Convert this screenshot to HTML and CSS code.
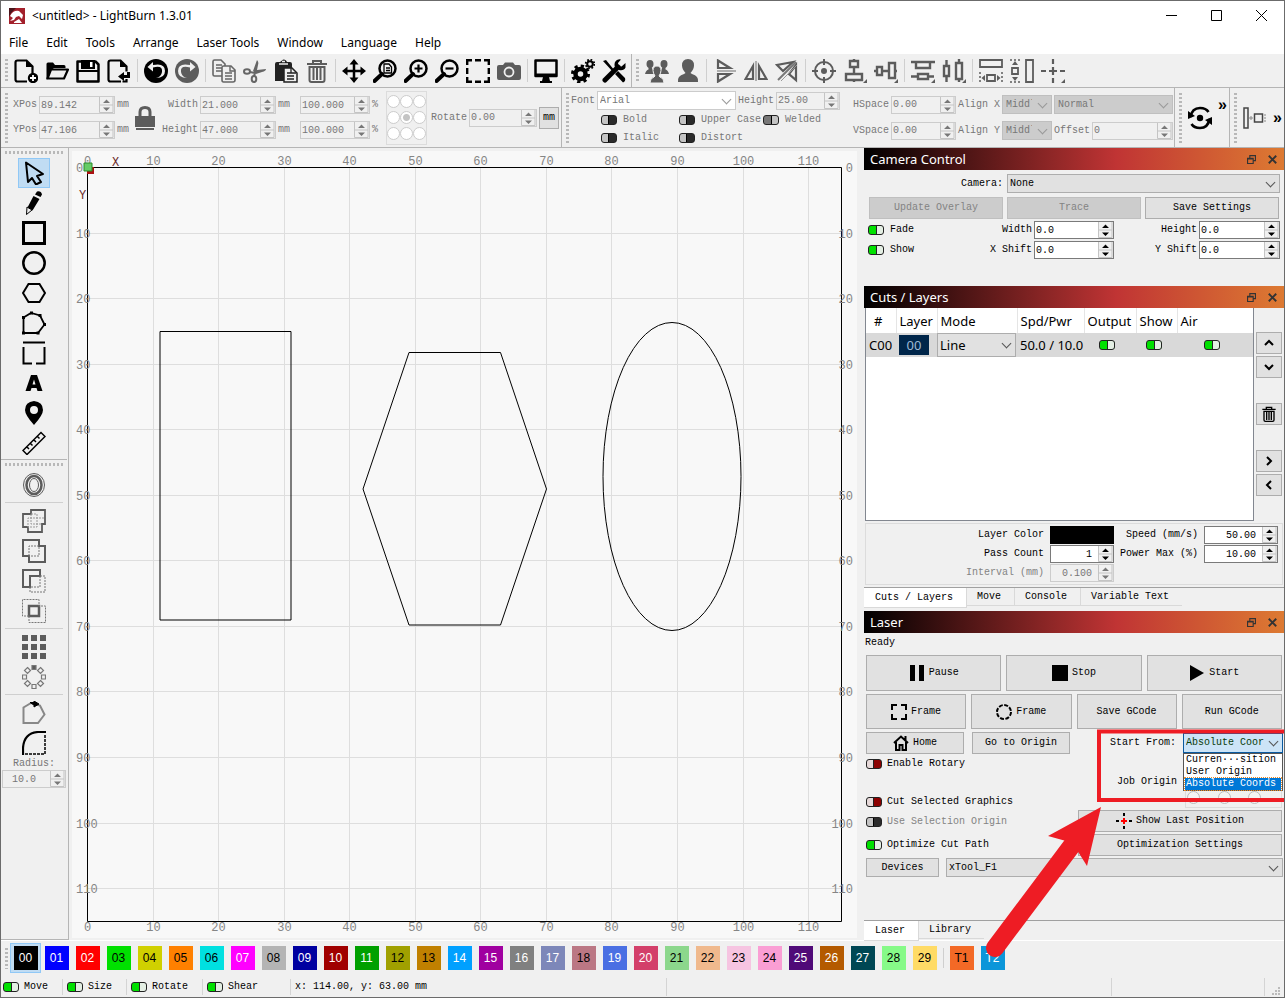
FILE: index.html
```html
<!DOCTYPE html>
<html lang="en">
<head>
    <meta charset="UTF-8">
    <meta name="viewport" content="width=device-width, initial-scale=1.0">
    <title>LightBurn 1.3.01</title>
    <link rel="stylesheet" href="styles.css">
</head>
<body>
  <!-- icon sprite -->
  <svg class="sprite" aria-hidden="true">
    <symbol id="spin" viewBox="0 0 15 16"><path d="M.5 0v15.500h13.500V0M.5 8h13.500" fill="none" stroke="#c4c4c4"/><path d="M4 6L7.500 2.500 11 6zM4 10.500h7L7.500 14z" fill="currentColor"/></symbol>
    <symbol id="new" viewBox="0 0 24 24"><path d="M13 22.500H3.500q-2 0-2-2v-17q0-2 2-2h9l6 6v7" fill="none" stroke="#000" stroke-width="2.200"/><path d="M12 1v7h7z"/><circle cx="19" cy="19" r="5.200"/><path d="M19 16v6M16 19h6" stroke="#fff" stroke-width="1.800"/></symbol>
    <symbol id="open" viewBox="0 0 24 24"><path d="M1.500 20V5q0-1.500 1.500-1.500h5l2 2.500h9q1.500 0 1.500 1.500V9H9L5 12 2 21z"/><path d="M6 10.500h17L19 19.500H2.500z" fill="#efefef" stroke="#000" stroke-width="2.200" stroke-linejoin="round"/></symbol>
    <symbol id="save" viewBox="0 0 24 24"><path d="M1.500 2.500h18l3 3v17h-21z" fill="#efefef" stroke="#000" stroke-width="2.500" stroke-linejoin="round"/><path d="M5 1h14v9H5z"/><path d="M14 3h2.500v5H14z" fill="#fff"/><path d="M2 12h20" stroke="#000" stroke-width="2"/></symbol>
    <symbol id="import" viewBox="0 0 24 24"><path d="M14 22.500H3.500q-2 0-2-2v-17q0-2 2-2h10l6 6v5M19.500 20v2.500h-4" fill="none" stroke="#000" stroke-width="2.200"/><path d="M13 1v7h7zM11 17.500l6-4.500v3h3v-3h3v6h-6v3z"/></symbol>
    <symbol id="undo" viewBox="0 0 24 24"><circle cx="12" cy="12" r="12"/><path d="M9 8.500Q19 6 18 13q-.8 5-6 6 9 0 9-7 0-8.500-12-6V3L3.500 8 9 12.500z" fill="#efefef"/></symbol>
    <symbol id="redo" viewBox="0 0 24 24"><circle cx="12" cy="12" r="12" fill="#5c5c5c"/><path d="M15 8.500Q5 6 6 13q.8 5 6 6-9 0-9-7 0-8.500 12-6V3l5.500 5-5.500 4.500z" fill="#efefef"/></symbol>
    <symbol id="copy" viewBox="0 0 24 24"><g fill="#efefef" stroke="#666" stroke-width="1.600"><path d="M12 17H2.500Q1 17 1 15.500v-13Q1 1 2.500 1H9l4 4v10z"/><path d="M4 6h6M4 9h6M4 12h6" stroke-width="1.400"/><path d="M11.500 7H19l4 4v10q0 2-2 2h-9.500Q10 23 10 21V8.500Q10 7 11.500 7z"/><path d="M18 7v5h5M13 14h7M13 17h7M13 20h7" fill="none" stroke-width="1.400"/></g></symbol>
    <symbol id="cut" viewBox="0 0 24 24"><g fill="none" stroke="#666" stroke-width="2"><ellipse cx="4" cy="12.500" rx="3" ry="2.300"/><ellipse cx="11" cy="20" rx="2.300" ry="3"/><path d="M7 13l5 1-1 3"/></g><path d="M10 12l4-11q2 2 1 5l-1 5 9-1q0 2-4 3l-6 2z" fill="#666"/></symbol>
    <symbol id="paste" viewBox="0 0 24 24"><path d="M1 5q0-2 2-2h3l2-1.500Q9.500-.5 12 1.500L13 3h3q2 0 2 2v17H1z" fill="#222"/><path d="M5 5h9M8 2.500h3" stroke="#efefef" stroke-width="1.500"/><path d="M10 9h8l5 5v9H10z" fill="#efefef" stroke="#222" stroke-width="1.500"/><path d="M13 14h7M13 17h7M13 20h7M17 9v5h5" fill="none" stroke="#222" stroke-width="1.300"/></symbol>
    <symbol id="trash" viewBox="0 0 24 24"><path d="M2 5h20M8 5V2h8v3" fill="none" stroke="currentColor" stroke-width="2"/><path d="M4.500 8h15v13q0 2-2 2h-11q-2 0-2-2z" fill="none" stroke="currentColor" stroke-width="2"/><path d="M8.500 9v12M12 9v12M15.500 9v12" stroke="currentColor" stroke-width="2"/></symbol>
    <symbol id="move" viewBox="0 0 24 24"><path d="M12 3v18M3 12h18" stroke="#000" stroke-width="2.500"/><path d="M12 0l4.500 5.500h-9zM12 24l4.500-5.500h-9zM0 12l5.500-4.500v9zM24 12l-5.500-4.500v9z"/></symbol>
    <symbol id="zoompage" viewBox="0 0 24 24"><circle cx="14.500" cy="9.500" r="8" fill="none" stroke="#000" stroke-width="2.500"/><path d="M9 15l-7.500 7" stroke="#000" stroke-width="4" stroke-linecap="round"/><path d="M11 5h5l2.500 3v6H11zM13 9h4M13 11.500h4" fill="none" stroke="#000" stroke-width="1.300"/></symbol>
    <symbol id="zoomin" viewBox="0 0 24 24"><circle cx="14.500" cy="9.500" r="8" fill="none" stroke="#000" stroke-width="2.500"/><path d="M9 15l-7.500 7" stroke="#000" stroke-width="4" stroke-linecap="round"/><path d="M14.500 5.500v8M10.500 9.500h8" stroke="#000" stroke-width="2.200"/></symbol>
    <symbol id="zoomout" viewBox="0 0 24 24"><circle cx="14.500" cy="9.500" r="8" fill="none" stroke="#000" stroke-width="2.500"/><path d="M9 15l-7.500 7" stroke="#000" stroke-width="4" stroke-linecap="round"/><path d="M10.500 9.500h8" stroke="#000" stroke-width="2.200"/></symbol>
    <symbol id="marquee" viewBox="0 0 24 24"><path d="M1.200 6V1.200H6M9 1.200h6M18 1.200h4.800V6M22.800 9v6M22.800 18v4.800H18M15 22.800H9M6 22.800H1.200V18M1.200 15V9" fill="none" stroke="#000" stroke-width="2.400"/></symbol>
    <symbol id="camera" viewBox="0 0 24 24"><path d="M2 6h4l2-2.500h8L18 6h4q2 0 2 2v11q0 2-2 2H2q-2 0-2-2V8q0-2 2-2z" fill="#5c5c5c"/><circle cx="12" cy="13" r="4.500" fill="none" stroke="#efefef" stroke-width="1.800"/></symbol>
    <symbol id="monitor" viewBox="0 0 24 24"><path d="M1.500 1.500h21v15.500h-21z" fill="none" stroke="#000" stroke-width="2.500" stroke-linejoin="round"/><path d="M1 14.500h22v3H1zM9 18h6l1 4h2v2H6v-2h2z"/></symbol>
    <symbol id="gears" viewBox="0 0 24 24"><circle cx="9.500" cy="15" r="5" fill="none" stroke="#000" stroke-width="4.500"/><circle cx="9.500" cy="15" r="8" fill="none" stroke="#000" stroke-width="3" stroke-dasharray="3.200 3.080"/><circle cx="19" cy="5" r="2.800" fill="none" stroke="#000" stroke-width="2"/><circle cx="19" cy="5" r="4.300" fill="none" stroke="#000" stroke-width="1.800" stroke-dasharray="1.700 1.680"/></symbol>
    <symbol id="wrench" viewBox="0 0 24 24"><path d="M3 21L16 8" stroke="#000" stroke-width="5" stroke-linecap="round"/><path d="M23.500 4l-4 3.500-3-.5-.5-3L19 .5q-4-1-6 2.500-1 3 0 5l4 3q5 1 6.500-2.500z"/><path d="M1 2l3-1 9 11-1.500 1.500zM13 15l3-3 7 7q1 3-2 4.500z"/></symbol>
    <symbol id="group" viewBox="0 0 24 24"><g fill="#5c5c5c"><ellipse cx="5" cy="5" rx="3.500" ry="4"/><ellipse cx="19" cy="5" rx="3.500" ry="4"/><path d="M0 15q1-4 3.500-4.500V8h3l3 7zM24 15q-1-4-3.500-4.500V8h-3l-3 7z"/><path d="M5 24q0-5 4-6l1-1q-2-3-2-5.500Q8 7 12 7t4 4.500Q16 14 14 17l1 1q4 1 4 6z" stroke="#efefef"/></g></symbol>
    <symbol id="user" viewBox="0 0 24 24"><path d="M2 23q-1-6 6-8l1.500-1Q6 10 6 6.500 6 0 12 0t6 6.500Q18 10 14.500 14l1.500 1q7 2 6 8z" fill="#5c5c5c"/></symbol>
    <symbol id="flipv" viewBox="0 0 24 24"><path d="M5 1.500l12 7.500H5zM5 22.500L17 15H5z" fill="none" stroke="#5c5c5c" stroke-width="2.200"/><path d="M4 12h19" stroke="#999" stroke-width="1.500"/></symbol>
    <symbol id="fliph" viewBox="0 0 24 24"><path d="M9 20V7l-7.500 13zM15 20V7l7.500 13z" fill="none" stroke="#5c5c5c" stroke-width="2.200"/><path d="M12 2v20" stroke="#999" stroke-width="1.500"/></symbol>
    <symbol id="flipd" viewBox="0 0 24 24"><path d="M18 3L2 6l6 6zM21 6v15l-7-6z" fill="none" stroke="#5c5c5c" stroke-width="2.200"/><path d="M3 21L21 3" stroke="#777" stroke-width="2"/><path d="M6 22L22 6" stroke="#999"/></symbol>
    <symbol id="target" viewBox="0 0 24 24"><circle cx="12" cy="12" r="9" fill="none" stroke="#5c5c5c" stroke-width="2"/><circle cx="12" cy="12" r="3" fill="#5c5c5c"/><path d="M12 0v6M12 18v6M0 12h6M18 12h6" stroke="#5c5c5c" stroke-width="2"/></symbol>
    <symbol id="alignv" viewBox="0 0 24 24"><path d="M7 2h8v6H7zM3 15h16v6H3zM11 8v7M11 0v2M11 21v2" fill="none" stroke="#5c5c5c" stroke-width="2.400"/><path d="M20 24h4v-4z" fill="#5c5c5c"/></symbol>
    <symbol id="alignh" viewBox="0 0 24 24"><path d="M3 8h5v8H3zM15 4h6v15h-6zM8 12h7M0 12h3M21 12h2" fill="none" stroke="#5c5c5c" stroke-width="2.400"/><path d="M20 24h4v-4z" fill="#5c5c5c"/></symbol>
    <symbol id="distv" viewBox="0 0 24 24"><path d="M5 3h14v6H5zM7 15h10v5H7zM0 3h5M19 3h5M0 17.500h7M17 17.500h6" fill="none" stroke="#5c5c5c" stroke-width="2.400"/><path d="M20 24h4v-4z" fill="#5c5c5c"/></symbol>
    <symbol id="disth" viewBox="0 0 24 24"><path d="M2 7h5v10H2zM14 4h6v16h-6zM4.500 1v6M4.500 17v6M17 0v4M17 20v3" fill="none" stroke="#5c5c5c" stroke-width="2.400"/><path d="M20 24h4v-4z" fill="#5c5c5c"/></symbol>
    <symbol id="samew" viewBox="0 0 24 24"><path d="M1 1h22v7H1zM8 16h8v6H8z" fill="none" stroke="#5c5c5c" stroke-width="1.800"/><path d="M1 13v11M23 13v11" stroke="#5c5c5c" stroke-width="1.500" stroke-dasharray="2 2"/><path d="M2.500 19L6 16v6zM21.500 19L18 16v6z" fill="#5c5c5c"/></symbol>
    <symbol id="sameh" viewBox="0 0 24 24"><path d="M16 1h7v22h-7zM2 9h6v6H2z" fill="none" stroke="#5c5c5c" stroke-width="1.800"/><path d="M0 1h11M0 23h11" stroke="#5c5c5c" stroke-width="1.500" stroke-dasharray="2 2"/><path d="M5 2L2 6h6zM5 22l-3-4h6z" fill="#5c5c5c"/></symbol>
    <symbol id="cross" viewBox="0 0 24 24"><path d="M12 0v5M12 8v8M12 19v5M0 12h5M8 12h8M19 12h5" stroke="#5c5c5c" stroke-width="2.200"/><path d="M20 24h4v-4z" fill="#5c5c5c"/></symbol>
    <symbol id="arrow" viewBox="0 0 24 24"><path d="M4 1.500L6 21l4-4 4 6.500 5-2.500-4-6 6-2z" fill="none" stroke="#000" stroke-width="2" stroke-linejoin="round"/></symbol>
    <symbol id="pencil" viewBox="0 0 24 24"><path d="M13 3.500l2-3q4-1 5 3L18.500 6zM11.500 5l6 3-7 11.500-5-3z"/><path d="M5 16l5 3-5.500 4.500z" fill="#efefef" stroke="#000"/></symbol>
    <symbol id="rect" viewBox="0 0 24 24"><path d="M1.500 1.500h21v21h-21z" fill="none" stroke="#000" stroke-width="3"/></symbol>
    <symbol id="circle" viewBox="0 0 24 24"><circle cx="12" cy="12" r="10.700" fill="none" stroke="#000" stroke-width="2.500"/></symbol>
    <symbol id="hex" viewBox="0 0 24 24"><path d="M6.500 3h11L23 12l-5.500 9h-11L1 12z" fill="none" stroke="#000" stroke-width="2"/></symbol>
    <symbol id="poly" viewBox="0 0 24 24"><path d="M1.500 22V6.500L9 2l9 2.500 4.500 9L16 22z" fill="none" stroke="#000" stroke-width="1.800"/><path d="M0 20.500h3v3H0zM0 5h3v3H0zM8 .5h3v3H8zM16.500 3h3v3h-3zM21 12h3v3h-3zM14.500 20.500h3v3h-3z"/></symbol>
    <symbol id="tabs" viewBox="0 0 24 24"><path d="M1 1.500h22M1.500 6v16.500H10M14 22.500h8.500V6" fill="none" stroke="#000" stroke-width="2"/></symbol>
    <symbol id="text" viewBox="0 0 24 24"><path fill-rule="evenodd" d="M9 4h6l5.500 16h-5l-1-3h-5l-1 3h-5zM12 8.500L10.500 13.500h3z"/></symbol>
    <symbol id="pin" viewBox="0 0 24 24"><path fill-rule="evenodd" d="M12 0q9 1 9 9 0 5-9 15Q3 14 3 9q0-8 9-9zM12 5a4 4 0 100 8 4 4 0 000-8z"/></symbol>
    <symbol id="ruler" viewBox="0 0 24 24"><path d="M1 19.500L19 1.500l4 4-18 18zM5 16l2 2M8.500 12.500l2 2M12 9l2 2M15.500 5.500l2 2" fill="none" stroke="#000" stroke-width="1.500"/></symbol>
    <symbol id="offset" viewBox="0 0 24 24"><g fill="none" stroke="#5c5c5c"><ellipse cx="12" cy="12" rx="10.500" ry="11.500"/><ellipse cx="12" cy="12" rx="7.500" ry="9" stroke-width="2.500"/><ellipse cx="12" cy="12" rx="4.500" ry="6.500"/></g></symbol>
    <symbol id="weld" viewBox="0 0 24 24"><path d="M9 1h14v14h-3v8H6v-5H1V5h8z" fill="none" stroke="#5c5c5c" stroke-width="1.800"/><path d="M9 5h6v13H6V9h17M9 5v10h11" fill="none" stroke="#999" stroke-dasharray="2 1"/></symbol>
    <symbol id="union" viewBox="0 0 24 24"><path d="M1 1h16v6h6v16H7v-6H1z" fill="none" stroke="#5c5c5c" stroke-width="2"/><path d="M7 17V7h10v10z" fill="none" stroke="#777" stroke-dasharray="2 1"/></symbol>
    <symbol id="subtract" viewBox="0 0 24 24"><path d="M1 1h17v6H8v11H1z" fill="none" stroke="#5c5c5c" stroke-width="2"/><path d="M18 7h5v16H8v-5h10z" fill="none" stroke="#777" stroke-dasharray="2 1"/></symbol>
    <symbol id="intersect" viewBox="0 0 24 24"><path d="M7 7h10v10H7z" fill="none" stroke="#5c5c5c" stroke-width="2.500"/><path d="M7 17H.5V.5H17V7h6.500v16.500H7z" fill="none" stroke="#777" stroke-dasharray="2 1"/></symbol>
    <symbol id="gridarray" viewBox="0 0 24 24"><path d="M0 0h6v6H0zM9 0h6v6H9zM18 0h6v6h-6zM0 9h6v6H0zM9 9h6v6H9zM18 9h6v6h-6zM0 18h6v6H0zM9 18h6v6H9zM18 18h6v6h-6z" fill="#5c5c5c"/></symbol>
    <symbol id="circarray" viewBox="0 0 24 24"><g fill="none" stroke="#777" stroke-width="1.200"><path d="M10 .5h4v4h-4z" fill="#5c5c5c"/><path d="M10 19.500h4v4h-4zM.5 10h4v4h-4zM19.500 10h4v4h-4zM5.500 2.500l3 3-3 3-3-3zM18.500 2.500l3 3-3 3-3-3zM5.500 15.500l3 3-3 3-3-3zM18.500 15.500l3 3-3 3-3-3z"/></g></symbol>
    <symbol id="polystart" viewBox="0 0 24 24"><path d="M1.500 22V6.500L9 2l9 2.500 4.500 9L16 22z" fill="none" stroke="#888" stroke-width="2"/><path d="M8 1.500h4V0l5 3-5 3V4z" stroke="#000"/></symbol>
    <symbol id="fillet" viewBox="0 0 24 24"><path d="M1 24V17Q2 2 16 1h8" fill="none" stroke="#000" stroke-width="2.200"/><path d="M23 4v19H2" fill="none" stroke="#000" stroke-width="1.500" stroke-dasharray="3 1"/></symbol>
    <symbol id="rotate" viewBox="0 0 24 24"><circle cx="12" cy="12" r="3.200"/><path d="M2.500 11Q4 2 12 2q6 0 8.500 4M21.500 13q-1.500 9-9.500 9-6 0-8.500-4" fill="none" stroke="#000" stroke-width="2.600"/><path d="M0 5v8l7-3zM24 19v-8l-7 3z"/></symbol>
    <symbol id="float" viewBox="0 0 8 8"><path d="M2.500 2.500V.5h5v4.500H5.500M.5 3h5v4.500h-5zM.5 3.500h5" fill="none" stroke="#333"/></symbol>
    <symbol id="close" viewBox="0 0 8 8"><path d="M.7.7l6.600 6.600M7.300.7L.7 7.300" stroke="#333" stroke-width="1.700"/></symbol>
  </svg>

  <div class="window">
    <header class="titlebar">
      <svg class="logo" viewBox="0 0 16 16"><path d="M0 0h16v16H0z" fill="#a3202b"/><path d="M0 0h7L2 5 0 9z" fill="#4a141a"/><path d="M1 8q3-6 9-5l4 4-1 4-3-3-3 1-2 3-4 1 3-3zM5 14l5-3 3 4H5z" fill="#fff"/></svg>
      <h1>&lt;untitled&gt; - LightBurn 1.3.01</h1>
      <div class="window-controls">
        <button aria-label="Minimize"><svg viewBox="0 0 11 11"><path d="M0 5.500h11" stroke="#000"/></svg></button>
        <button aria-label="Maximize"><svg viewBox="0 0 11 11"><path d="M.5.5h10v10H.5z" fill="none" stroke="#000"/></svg></button>
        <button aria-label="Close"><svg viewBox="0 0 11 11"><path d="M0 0l11 11M11 0L0 11" stroke="#000"/></svg></button>
      </div>
    </header>
    <nav class="menu">
      <a href="#">File</a><a href="#">Edit</a><a href="#">Tools</a><a href="#">Arrange</a><a href="#">Laser Tools</a><a href="#">Window</a><a href="#">Language</a><a href="#">Help</a>
    </nav>

    <div class="toolbar main-tools">
      <div class="tool-group">
        <span class="grip"></span>
        <button aria-label="New"><svg><use href="#new"/></svg></button>
        <button aria-label="Open"><svg><use href="#open"/></svg></button>
        <button aria-label="Save"><svg><use href="#save"/></svg></button>
        <button aria-label="Import"><svg><use href="#import"/></svg></button>
        <span class="sep"></span>
        <button aria-label="Undo"><svg><use href="#undo"/></svg></button>
        <button aria-label="Redo"><svg><use href="#redo"/></svg></button>
        <span class="sep"></span>
        <button aria-label="Copy"><svg><use href="#copy"/></svg></button>
        <button aria-label="Cut"><svg><use href="#cut"/></svg></button>
        <button aria-label="Paste"><svg><use href="#paste"/></svg></button>
        <button aria-label="Delete" class="dim"><svg><use href="#trash"/></svg></button>
        <span class="sep"></span>
        <button aria-label="Pan"><svg><use href="#move"/></svg></button>
        <button aria-label="Zoom to page"><svg><use href="#zoompage"/></svg></button>
        <button aria-label="Zoom in"><svg><use href="#zoomin"/></svg></button>
        <button aria-label="Zoom out"><svg><use href="#zoomout"/></svg></button>
        <button aria-label="Frame selection"><svg><use href="#marquee"/></svg></button>
        <button aria-label="Camera"><svg><use href="#camera"/></svg></button>
        <span class="sep"></span>
        <button aria-label="Preview"><svg><use href="#monitor"/></svg></button>
        <span class="sep"></span>
        <button aria-label="Settings"><svg><use href="#gears"/></svg></button>
        <button aria-label="Device settings"><svg><use href="#wrench"/></svg></button>
      </div>
      <div class="tool-group last">
        <span class="grip"></span>
        <button aria-label="Group"><svg><use href="#group"/></svg></button>
        <button aria-label="Ungroup"><svg><use href="#user"/></svg></button>
        <span class="sep"></span>
        <button aria-label="Flip vertical"><svg><use href="#flipv"/></svg></button>
        <button aria-label="Flip horizontal"><svg><use href="#fliph"/></svg></button>
        <button aria-label="Mirror across line"><svg><use href="#flipd"/></svg></button>
        <span class="sep"></span>
        <button aria-label="Center"><svg><use href="#target"/></svg></button>
        <button aria-label="Align vertical"><svg><use href="#alignv"/></svg></button>
        <button aria-label="Align horizontal"><svg><use href="#alignh"/></svg></button>
        <span class="sep"></span>
        <button aria-label="Distribute vertical"><svg><use href="#distv"/></svg></button>
        <button aria-label="Distribute horizontal"><svg><use href="#disth"/></svg></button>
        <span class="sep"></span>
        <button aria-label="Same width"><svg><use href="#samew"/></svg></button>
        <button aria-label="Same height"><svg><use href="#sameh"/></svg></button>
        <button aria-label="Move to position"><svg><use href="#cross"/></svg></button>
      </div>
    </div>

    <div class="toolbar options">
      <div class="option-group numeric">
        <span class="grip"></span>
        <div class="fields pos">
          <label for="xpos">XPos</label><span class="spin off"><input id="xpos" value="89.142" disabled><svg><use href="#spin"/></svg></span><span>mm</span>
          <label for="ypos">YPos</label><span class="spin off"><input id="ypos" value="47.106" disabled><svg><use href="#spin"/></svg></span><span>mm</span>
        </div>
        <svg class="lock" viewBox="0 0 20 24"><path d="M5 11V6q0-4.500 5-4.500T15 6v5" fill="none" stroke="#5c5c5c" stroke-width="3"/><path d="M0 10h20v11H0zM1 22h18v2H1z" fill="#5c5c5c"/></svg>
        <div class="fields size">
          <label for="w">Width</label><span class="spin off"><input id="w" value="21.000" disabled><svg><use href="#spin"/></svg></span><span>mm</span><span class="spin off"><input aria-label="Width percent" value="100.000" disabled><svg><use href="#spin"/></svg></span><span>%</span>
          <label for="h">Height</label><span class="spin off"><input id="h" value="47.000" disabled><svg><use href="#spin"/></svg></span><span>mm</span><span class="spin off"><input aria-label="Height percent" value="100.000" disabled><svg><use href="#spin"/></svg></span><span>%</span>
        </div>
        <div class="anchors">
          <input type="radio" name="anchor" aria-label="Top left" disabled><input type="radio" name="anchor" aria-label="Top" disabled><input type="radio" name="anchor" aria-label="Top right" disabled>
          <input type="radio" name="anchor" aria-label="Left" disabled><input type="radio" name="anchor" aria-label="Middle" checked disabled><input type="radio" name="anchor" aria-label="Right" disabled>
          <input type="radio" name="anchor" aria-label="Bottom left" disabled><input type="radio" name="anchor" aria-label="Bottom" disabled><input type="radio" name="anchor" aria-label="Bottom right" disabled>
        </div>
        <div class="rotate-field">
          <label for="rot">Rotate</label><span class="spin off"><input id="rot" value="0.00" disabled><svg><use href="#spin"/></svg></span><button class="units">mm</button>
        </div>
      </div>
      <div class="option-group type">
        <span class="grip"></span>
        <div class="font-box">
          <div class="font-row">
            <label for="font">Font</label><span class="combo white"><select id="font" disabled><option>Arial</option></select></span>
            <label for="fh">Height</label><span class="spin off"><input id="fh" value="25.00" disabled><svg><use href="#spin"/></svg></span>
          </div>
          <div class="font-flags">
            <label class="toggle"><input type="checkbox" disabled>Bold</label><label class="toggle"><input type="checkbox" disabled>Upper Case</label><label class="toggle"><input type="checkbox" checked disabled>Welded</label>
            <label class="toggle"><input type="checkbox" disabled>Italic</label><label class="toggle"><input type="checkbox" disabled>Distort</label>
          </div>
        </div>
        <div class="fields spacing">
          <label for="hs">HSpace</label><span class="spin off"><input id="hs" value="0.00" disabled><svg><use href="#spin"/></svg></span>
          <label for="ax">Align X</label><span class="combo off"><select id="ax" disabled><option>Middle</option></select></span>
          <span class="combo off wide"><select aria-label="Style" disabled><option>Normal</option></select></span>
          <label for="vs">VSpace</label><span class="spin off"><input id="vs" value="0.00" disabled><svg><use href="#spin"/></svg></span>
          <label for="ay">Align Y</label><span class="combo off"><select id="ay" disabled><option>Middle</option></select></span>
          <span class="offset-field"><label for="off">Offset</label><span class="spin off"><input id="off" value="0" disabled><svg><use href="#spin"/></svg></span></span>
        </div>
      </div>
      <div class="option-group more">
        <span class="grip"></span>
        <button aria-label="Rotate view"><svg class="rot"><use href="#rotate"/></svg></button><button class="chev raised" aria-label="More">»</button>
      </div>
      <div class="option-group more last">
        <span class="grip"></span>
        <button aria-label="Move laser"><svg class="jog" viewBox="0 0 23 22"><path d="M1 1h4v20H1z" fill="none" stroke="#444" stroke-width="1.500"/><path d="M11.500 7h8v8h-8z" fill="none" stroke="#444" stroke-width="1.500"/><path d="M6 11h4M8 9v4M21 8h2M21 11h2M21 14h2" stroke="#888"/></svg></button><button class="chev" aria-label="More">»</button>
      </div>
    </div>

    <main class="main">
      <aside class="side-tools">
        <span class="grip-h"></span>
        <div class="tool-list">
          <button class="active" aria-label="Select"><svg><use href="#arrow"/></svg></button>
          <button aria-label="Draw lines"><svg><use href="#pencil"/></svg></button>
          <button aria-label="Rectangle"><svg><use href="#rect"/></svg></button>
          <button aria-label="Ellipse"><svg><use href="#circle"/></svg></button>
          <button aria-label="Polygon"><svg><use href="#hex"/></svg></button>
          <button aria-label="Edit nodes"><svg><use href="#poly"/></svg></button>
          <button aria-label="Tabs"><svg><use href="#tabs"/></svg></button>
          <button aria-label="Text"><svg><use href="#text"/></svg></button>
          <button aria-label="Position laser"><svg><use href="#pin"/></svg></button>
          <button aria-label="Measure"><svg><use href="#ruler"/></svg></button>
        </div>
        <span class="grip-h"></span>
        <div class="tool-list second">
          <button aria-label="Offset shapes"><svg><use href="#offset"/></svg></button>
          <hr>
          <button aria-label="Weld"><svg><use href="#weld"/></svg></button>
          <button aria-label="Union"><svg><use href="#union"/></svg></button>
          <button aria-label="Subtract"><svg><use href="#subtract"/></svg></button>
          <button aria-label="Intersect"><svg><use href="#intersect"/></svg></button>
          <hr>
          <button aria-label="Grid array"><svg><use href="#gridarray"/></svg></button>
          <button aria-label="Circular array"><svg><use href="#circarray"/></svg></button>
          <hr>
          <button aria-label="Start point"><svg><use href="#polystart"/></svg></button>
          <button aria-label="Radius tool"><svg><use href="#fillet"/></svg></button>
          <label for="radius">Radius:</label>
          <span class="spin off"><input id="radius" value="10.0" disabled><svg><use href="#spin"/></svg></span>
        </div>
      </aside>

      <section class="workspace">
        <svg id="bed" viewBox="72 151 785 787">
          <path d="M72 151h785v787H72z" fill="#f8f8f8"/>
          <g id="grid" stroke="#dedede"></g>
          <path d="M87.500 167.500h754v754h-754z" fill="none" stroke="#000"/>
          <g id="rulers"></g>
          <text x="112" y="166" class="axis">X</text>
          <text x="79" y="199" class="axis">Y</text>
          <path d="M87 167h7v7h-7z" fill="#a11"/>
          <path d="M84 163h8v8h-8z" fill="#6c6" stroke="#2a8a2a"/>
          <g fill="none" stroke="#000">
            <path d="M160 331.500h131v288.500H160z"/>
            <path d="M409 352.500h91.500l46 136.500-46 136H409L363 489z"/>
            <ellipse cx="672" cy="476.500" rx="69" ry="154"/>
          </g>
        </svg>
      </section>

      <aside class="dock">
        <section class="panel camera">
          <div class="panel-title"><h2>Camera Control</h2><button aria-label="Float"><svg><use href="#float"/></svg></button><button aria-label="Close panel"><svg><use href="#close"/></svg></button></div>
          <div class="camera-row"><label for="cam">Camera:</label><span class="combo"><select id="cam"><option>None</option></select></span></div>
          <div class="camera-buttons"><button class="btn" disabled>Update Overlay</button><button class="btn" disabled>Trace</button><button class="btn">Save Settings</button></div>
          <div class="camera-grid">
            <label class="toggle"><input type="checkbox" checked>Fade</label>
            <label for="cw">Width</label><span class="spin"><input id="cw" value="0.0"><svg><use href="#spin"/></svg></span>
            <label for="ch">Height</label><span class="spin"><input id="ch" value="0.0"><svg><use href="#spin"/></svg></span>
            <label class="toggle"><input type="checkbox" checked>Show</label>
            <label for="cx">X Shift</label><span class="spin"><input id="cx" value="0.0"><svg><use href="#spin"/></svg></span>
            <label for="cy">Y Shift</label><span class="spin"><input id="cy" value="0.0"><svg><use href="#spin"/></svg></span>
          </div>
        </section>

        <section class="panel cuts">
          <div class="panel-title"><h2>Cuts / Layers</h2><button aria-label="Float"><svg><use href="#float"/></svg></button><button aria-label="Close panel"><svg><use href="#close"/></svg></button></div>
          <div class="cuts-body">
            <div class="table-box">
              <table>
                <thead><tr><th class="c-num">#</th><th class="c-layer">Layer</th><th class="c-mode">Mode</th><th class="c-spd">Spd/Pwr</th><th class="c-out">Output</th><th class="c-show">Show</th><th>Air</th></tr></thead>
                <tbody><tr><td>C00</td><td><span class="chip">00</span></td><td><span class="combo"><select aria-label="Mode"><option>Line</option></select></span></td><td>50.0 / 10.0</td><td class="mid"><input type="checkbox" aria-label="Output" checked></td><td class="mid"><input type="checkbox" aria-label="Show" checked></td><td class="mid"><input type="checkbox" aria-label="Air" checked></td></tr></tbody>
              </table>
            </div>
            <div class="order">
              <button class="btn" aria-label="Move up"><svg viewBox="0 0 10 10"><path d="M1 7l4-4 4 4"/></svg></button>
              <button class="btn" aria-label="Move down"><svg viewBox="0 0 10 10"><path d="M1 3l4 4 4-4"/></svg></button>
              <button class="btn trash" aria-label="Delete layer"><svg><use href="#trash"/></svg></button>
              <button class="btn" aria-label="Next"><svg viewBox="0 0 10 10"><path d="M3 1l4 4-4 4"/></svg></button>
              <button class="btn" aria-label="Previous"><svg viewBox="0 0 10 10"><path d="M7 1L3 5l4 4"/></svg></button>
            </div>
          </div>
          <div class="layer-form">
            <span>Layer Color</span><span class="swatch"></span>
            <label for="speed">Speed (mm/s)</label><span class="spin num"><input id="speed" value="50.00"><svg><use href="#spin"/></svg></span>
            <label for="pass">Pass Count</label><span class="spin num"><input id="pass" value="1"><svg><use href="#spin"/></svg></span>
            <label for="power">Power Max (%)</label><span class="spin num"><input id="power" value="10.00"><svg><use href="#spin"/></svg></span>
            <label for="interval" class="muted">Interval (mm)</label><span class="spin off num"><input id="interval" value="0.100" disabled><svg><use href="#spin"/></svg></span>
          </div>
          <div class="tabs"><button class="on">Cuts / Layers</button><button>Move</button><button>Console</button><button>Variable Text</button></div>
        </section>

        <section class="panel laser">
          <div class="panel-title"><h2>Laser</h2><button aria-label="Float"><svg><use href="#float"/></svg></button><button aria-label="Close panel"><svg><use href="#close"/></svg></button></div>
          <p class="status">Ready</p>
          <div class="row three">
            <button class="btn"><svg viewBox="0 0 16 16"><path d="M1 0h5v16H1zM10 0h5v16h-5z"/></svg>Pause</button>
            <button class="btn"><svg viewBox="0 0 16 16"><path d="M0 0h16v16H0z"/></svg>Stop</button>
            <button class="btn"><svg viewBox="0 0 16 16"><path d="M1 0l14 8-14 8z"/></svg>Start</button>
          </div>
          <div class="row four">
            <button class="btn"><svg viewBox="0 0 16 16"><path d="M1 6V1h5M10 1h5v5M15 10v5h-5M6 15H1v-5" fill="none" stroke="#000" stroke-width="2"/></svg>Frame</button>
            <button class="btn"><svg viewBox="0 0 16 16"><circle cx="8" cy="8" r="7" fill="none" stroke="#000" stroke-width="2" stroke-dasharray="4 1.500"/></svg>Frame</button>
            <button class="btn">Save GCode</button>
            <button class="btn">Run GCode</button>
          </div>
          <div class="laser-grid">
            <div class="laser-left">
              <div class="row two">
                <button class="btn"><svg viewBox="0 0 16 16"><path d="M1 8l7-6.500L15 8M3 7v8h3.500v-5h3v5H13V7M12.500 5V1" fill="none" stroke="#000" stroke-width="2"/></svg>Home</button>
                <button class="btn">Go to Origin</button>
              </div>
              <label class="toggle"><input type="checkbox">Enable Rotary</label>
              <label class="toggle cut"><input type="checkbox">Cut Selected Graphics</label>
              <label class="toggle muted"><input type="checkbox" disabled>Use Selection Origin</label>
              <label class="toggle"><input type="checkbox" checked>Optimize Cut Path</label>
            </div>
            <div class="laser-right">
              <div class="start-row"><label for="start">Start From:</label>
                <div class="dropdown">
                  <span class="combo open"><select id="start"><option>Absolute Coords</option></select></span>
                  <ul role="listbox" aria-label="Start From"><li role="option">Curren···sition</li><li role="option">User Origin</li><li role="option" aria-selected="true" class="picked">Absolute Coords</li></ul>
                </div>
              </div>
              <div class="job-row"><span>Job Origin</span>
                <div class="job-radios"><input type="radio" name="job" aria-label="Job origin left" disabled><input type="radio" name="job" aria-label="Job origin middle" disabled><input type="radio" name="job" aria-label="Job origin right" disabled></div>
              </div>
              <button class="btn"><svg viewBox="0 0 16 16"><path d="M8 0v3M8 13v3M0 8h3M13 8h3" stroke="#000" stroke-width="2"/><path d="M8 5v6M5 8h6" stroke="#f00" stroke-width="2"/></svg>Show Last Position</button>
              <button class="btn">Optimization Settings</button>
            </div>
          </div>
          <div class="device-row"><button class="btn">Devices</button><span class="combo"><select aria-label="Device"><option>xTool_F1</option></select></span></div>
          <div class="tabs bottom"><button class="on">Laser</button><button>Library</button></div>
        </section>

        <svg class="callout" viewBox="984 728 301 244" aria-hidden="true">
          <path d="M1290 731.500H1100v68.500h190" fill="none" stroke="#ee1c24" stroke-width="4"/>
          <path d="M996 948L1077 840" stroke="#ee1c24" stroke-width="18" stroke-linecap="round"/>
          <path d="M1102 807l-14 59-10-16-11-9-18-5z" fill="#ee1c24"/>
        </svg>
      </aside>
    </main>

    <div class="palette" id="palette"><span class="grip"></span></div>

    <footer class="statusbar">
      <label class="toggle"><input type="checkbox" checked>Move</label>
      <label class="toggle"><input type="checkbox" checked>Size</label>
      <label class="toggle wide"><input type="checkbox" checked>Rotate</label>
      <label class="toggle wider"><input type="checkbox" checked>Shear</label>
      <span class="coords">x: 114.00, y: 63.00 mm</span>
      <span class="cell"></span>
      <span class="cell small"></span>
      <svg class="size-grip" viewBox="0 0 9 9"><path d="M6 0h2v2H6zM3 3h2v2H3zM6 3h2v2H6zM0 6h2v2H0zM3 6h2v2H3zM6 6h2v2H6z" fill="#bbb"/></svg>
    </footer>
  </div>
  <script src="script.js"></script>
</body>
</html>
```

FILE: styles.css
```css
* {
  box-sizing: border-box;
}

body {
  margin: 0;
  font-family: "Liberation Mono", monospace;
  font-size: 10px;
  line-height: 12px;
  color: #000;
  background-color: #f0f0f0;
}

button, input, select {
  font: inherit;
  color: inherit;
  margin: 0;
}

button {
  padding: 0;
  border: 0;
  background: none;
}

h1, h2, p, ul {
  margin: 0;
  padding: 0;
}

.sprite {
  display: none;
}

.window {
  display: flex;
  flex-direction: column;
  min-height: 100vh;
  border: 1px solid #6b6b6b;
}

/* title and menu */
.titlebar {
  display: flex;
  align-items: center;
  height: 29px;
  padding-left: 8px;
  background-color: #fff;
}

.logo {
  width: 16px;
  height: 16px;
  margin-right: 7px;
}

.titlebar h1, .menu {
  font-family: "Noto Sans", sans-serif;
  font-size: 12px;
  font-weight: normal;
}

.panel-title h2, table {
  font-family: "Noto Sans", sans-serif;
  font-size: 13px;
  font-weight: normal;
}

.titlebar h1 {
  flex: 1;
}

.window-controls button {
  width: 45px;
  height: 29px;
}

.window-controls {
  display: flex;
}

.window-controls svg {
  display: block;
  width: 11px;
  height: 11px;
  margin: auto;
}

.menu {
  display: flex;
  gap: 18px;
  height: 24px;
  padding: 7px 8px 0;
  background-color: #fff;
}

.menu a {
  color: #000;
  text-decoration: none;
}

/* toolbars */
.toolbar {
  display: flex;
  border-bottom: 1px solid #b5b5b5;
}

.main-tools {
  height: 34px;
}

.grip {
  flex: none;
  width: 3px;
  margin: 5px 2px 4px 4px;
  background: repeating-linear-gradient(#b8b8b8 0 2px, transparent 2px 4px);
}

.grip-h {
  display: block;
  height: 3px;
  margin: 3px 2px 0 4px;
  background: repeating-linear-gradient(90deg, #b8b8b8 0 2px, transparent 2px 4px);
}

.tool-group {
  display: flex;
  align-items: stretch;
  padding-right: 2px;
  border-right: 1px solid #b5b5b5;
}

.tool-group.last, .option-group.last {
  border-right: 0;
}

.tool-group button {
  width: 31px;
}

.tool-group svg, .tool-list svg {
  display: block;
  width: 24px;
  height: 24px;
  margin: auto;
}

.dim {
  color: #5c5c5c;
}

.sep {
  width: 6px;
  margin: 5px 0;
  background: linear-gradient(#cfcfcf, #cfcfcf) center / 1px 100% no-repeat;
}

.options {
  height: 60px;
  color: #777;
}

.option-group {
  display: flex;
  align-items: center;
  border-right: 1px solid #b5b5b5;
}

.option-group .grip {
  align-self: stretch;
}

.numeric {
  padding-right: 2px;
}

.fields {
  display: grid;
  align-items: center;
  gap: 7px 2px;
}

.fields label {
  text-align: right;
}

.pos {
  grid-template-columns: 26px 76px 14px;
  margin-left: 1px;
}

.lock {
  width: 20px;
  height: 24px;
  margin: 0 5px 0 4px;
}

.size {
  grid-template-columns: 38px 76px 20px 70px 10px;
}

.spin {
  display: flex;
  align-items: center;
  height: 18px;
  border: 1px solid #7a7a7a;
  background-color: #fff;
  color: #000;
}

.spin.off {
  border-color: #ccc;
  background-color: #f0f0f0;
  color: #777;
}

.spin input {
  flex: 1;
  min-width: 0;
  width: 0;
  padding: 1px 1px 0;
  border: 0;
  background: none;
}

.spin.num input {
  padding-right: 6px;
  text-align: right;
}

.spin svg {
  flex: none;
  width: 15px;
  height: 16px;
  background-color: #f0f0f0;
}

.anchors {
  display: grid;
  grid-template-columns: repeat(3, 13px);
  grid-template-rows: repeat(3, 16px);
  place-items: center;
  padding: 2px 0;
  margin: 0 4px;
  border: 1px solid #dcdcdc;
}

input[type="radio"] {
  appearance: none;
  width: 13px;
  height: 13px;
  border: 1px solid #ccc;
  border-radius: 50%;
  background-color: #fff;
}

input[type="radio"]:checked {
  background: radial-gradient(#c4c4c4 0 3px, #fff 4px);
}

.rotate-field {
  display: flex;
  align-items: center;
  gap: 2px;
}

.rotate-field .spin {
  width: 68px;
}

.units {
  width: 20px;
  height: 22px;
  border: 1px solid #adadad;
  background-color: #e1e1e1;
  color: #000;
}

.type {
  flex: 1;
}

.font-box {
  flex: 1;
  align-self: flex-start;
  padding-top: 3px;
}

.font-row {
  display: flex;
  align-items: center;
  gap: 2px;
}

.font-row .combo {
  flex: 1;
}

.font-row .spin {
  width: 64px;
}

.font-flags {
  display: grid;
  grid-template-columns: 78px 84px auto;
  row-gap: 2px;
  padding: 2px 0 0 30px;
}

.toggle {
  display: flex;
  align-items: center;
  gap: 6px;
  height: 16px;
}

input[type="checkbox"] {
  appearance: none;
  flex: none;
  width: 16px;
  height: 10px;
  border: 1px solid #222;
  border-radius: 3px;
  background: linear-gradient(90deg, #e6d9d9 0 6px, #222 6px 7px, #8c0000 7px);
}

input[type="checkbox"]:checked {
  background: linear-gradient(90deg, #00e000 0 7px, #222 7px 8px, #e4efe4 8px);
}

input[type="checkbox"]:disabled {
  background: linear-gradient(90deg, #c4c4c4 0 6px, #000 6px 7px, #2b2b2b 7px);
}

input[type="checkbox"]:checked:disabled {
  background: linear-gradient(90deg, #777 0 7px, #000 7px 8px, #c4c4c4 8px);
}

.spacing {
  grid-template-columns: 38px 65px 42px 50px 119px;
  gap: 7px 2px;
  padding: 0 1px 0 11px;
}

.offset-field {
  display: flex;
  align-items: center;
  gap: 2px;
}

.offset-field .spin {
  flex: 1;
}

.combo {
  position: relative;
  display: flex;
  height: 19px;
  border: 1px solid #adadad;
  background-color: #e1e1e1;
}

.combo.off {
  border-color: #bfbfbf;
  background-color: #ccc;
}

.combo.white {
  background-color: #fff;
  border-color: #ccc;
}

.combo select {
  appearance: none;
  flex: 1;
  min-width: 0;
  padding: 0 18px 0 2px;
  border: 0;
  border-radius: 0;
  background: none;
  opacity: 1;
}

.combo.off select {
  padding: 0 19px 0 3px;
}

.combo::after {
  content: "";
  position: absolute;
  top: 4px;
  right: 5px;
  width: 6px;
  height: 6px;
  border-right: 1px solid #555;
  border-bottom: 1px solid #555;
  transform: rotate(45deg);
  pointer-events: none;
}

.combo.off::after, .combo.white::after {
  border-color: #999;
}

.more {
  align-items: center;
}

.more .rot {
  width: 26px;
  height: 24px;
  margin: 0 3px;
  display: block;
}

.more .jog {
  width: 23px;
  height: 22px;
  margin: 0 5px 0 4px;
  display: block;
}

.chev {
  width: 13px;
  font-family: "Liberation Sans", sans-serif;
  font-size: 16px;
  font-weight: bold;
  color: #000;
}

.raised {
  margin-bottom: 26px;
}

/* work area */
.main {
  flex: 1;
  display: grid;
  grid-template-columns: 68px minmax(0, 1fr) 420px;
}

.side-tools {
  padding-right: 1px;
  border-right: 1px solid #b5b5b5;
  border-bottom: 1px solid #b5b5b5;
  color: #777;
}

.tool-list {
  display: flex;
  flex-direction: column;
  align-items: center;
  padding: 4px 0 1px;
  border-bottom: 1px solid #b5b5b5;
}

.tool-list button {
  width: 32px;
  height: 30px;
  border: 1px solid transparent;
}

.tool-list .active {
  border-color: #90c8f6;
  background-color: #c0dcf3;
}

.tool-list.second {
  border: 0;
}

.tool-list hr {
  width: 58px;
  margin: 2px 0 3px;
  border: 0;
  border-top: 1px solid #cfcfcf;
}

.tool-list label {
  height: 12px;
}

.tool-list .spin {
  width: 64px;
}

.tool-list .spin input {
  padding-left: 9px;
}

.tool-list .spin svg {
  width: 15px;
  height: 16px;
}

.workspace {
  padding: 3px 7px 2px 3px;
}

#bed {
  display: block;
  width: 100%;
}

#rulers text {
  font-size: 12px;
  fill: #858585;
}

.axis {
  font-size: 12px;
  fill: #6b2a2a;
}

/* dock panels */
.dock {
  position: relative;
  display: flex;
  flex-direction: column;
}

.panel-title {
  display: flex;
  align-items: center;
  height: 22px;
  padding: 0 7px 0 6px;
  background: linear-gradient(90deg, #000, #c03434 60%, #dd7a32);
}

.panel-title h2 {
  flex: 1;
  color: #fff;
}

.panel-title button {
  width: 9px;
  height: 22px;
  margin-left: 12px;
}

.panel-title svg {
  display: block;
  width: 9px;
  height: 9px;
}

.camera {
  height: 138px;
}

.camera-row {
  display: grid;
  grid-template-columns: 1fr 273px;
  align-items: center;
  gap: 4px;
  padding: 4px 4px 0 0;
}

.camera-row label {
  text-align: right;
}

.btn {
  display: flex;
  align-items: center;
  justify-content: center;
  gap: 4px;
  border: 1px solid #adadad;
  background-color: #e1e1e1;
}

.btn:disabled {
  border-color: #bfbfbf;
  background-color: #ccc;
  color: #838383;
}

.camera-buttons {
  display: grid;
  grid-template-columns: repeat(3, 1fr);
  gap: 4px;
  padding: 4px 5px 2px;
}

.camera-buttons .btn {
  height: 22px;
}

.camera-grid {
  display: grid;
  grid-template-columns: 1fr 50px 80px 81px 81px;
  align-items: center;
  gap: 2px;
  padding: 0 4px;
}

.camera-grid label:not(.toggle) {
  text-align: right;
}

.cuts {
  height: 325px;
}

.cuts-body {
  display: flex;
  padding: 0 1px;
}

.table-box {
  flex: 1;
  height: 213px;
  border: 1px solid #828790;
  border-top: 0;
  background-color: #fff;
}

table {
  width: 100%;
  table-layout: fixed;
  border-collapse: collapse;
}

th, td {
  height: 25px;
  padding: 0 0 0 3px;
  font-weight: normal;
  text-align: left;
  white-space: nowrap;
}

th {
  border-right: 1px solid #e5e5e5;
}

th:last-child {
  border-right: 0;
}

tbody tr {
  background-color: #d9d9d9;
}

tbody td {
  height: 24px;
}

.c-num { width: 30px; padding-left: 8px; }
.c-layer { width: 41px; }
.c-mode { width: 80px; }
.c-spd { width: 67px; }
.c-out { width: 52px; }
.c-show { width: 41px; }

td:nth-child(3) {
  padding: 0 1px 0 0;
}

td .combo {
  height: 24px;
}

td .combo::after {
  top: 6px;
}

td.mid {
  padding: 0 6px 0 0;
  text-align: center;
  line-height: 10px;
}

.chip {
  display: block;
  width: 30px;
  height: 20px;
  line-height: 20px;
  text-align: center;
  color: #9db9d6;
  background-color: #00264a;
}

.order {
  display: flex;
  flex-direction: column;
  gap: 2px;
  width: 29px;
  padding: 24px 1px 0 2px;
}

.order .btn {
  height: 22px;
}

.order svg {
  width: 10px;
  height: 10px;
  fill: none;
  stroke: #000;
  stroke-width: 2;
}

.order .trash {
  margin: 23px 0;
}

.order .trash svg {
  width: 16px;
  height: 16px;
}

.layer-form {
  display: grid;
  grid-template-columns: 1fr 64px 78px 74px;
  align-items: center;
  gap: 1px 6px;
  margin: 2px 1px 0;
  padding: 2px 4px 2px 0;
  border: 1px solid #dcdcdc;
}

.layer-form > span:first-child, .layer-form label {
  text-align: right;
  white-space: nowrap;
}

.swatch {
  height: 18px;
  background-color: #000;
}

.muted {
  color: #838383;
}

.tabs {
  display: flex;
  align-items: flex-start;
  height: 20px;
  margin-top: 2px;
  border-top: 1px solid #a0a0a0;
}

.tabs button {
  height: 18px;
  padding: 0 13px 0 10px;
  border-right: 1px solid #d9d9d9;
  border-bottom: 1px solid #d9d9d9;
}

.tabs button:last-child {
  border-right: 0;
}

.tabs .on {
  height: 20px;
  padding: 0 13px 0 11px;
  background-color: #fff;
}

/* laser panel */
.laser {
  flex: 1;
  display: flex;
  flex-direction: column;
}

.status {
  padding: 4px 1px 6px;
}

.row {
  display: grid;
  gap: 5px;
  padding: 0 2px;
}

.row svg, .laser-right .btn svg {
  width: 16px;
  height: 16px;
}

.three {
  grid-template-columns: repeat(3, 1fr);
}

.three .btn {
  height: 36px;
}

.four {
  grid-template-columns: repeat(4, 1fr);
  padding-top: 3px;
}

.four .btn {
  height: 35px;
}

.laser-grid {
  display: grid;
  grid-template-columns: 206px 1fr;
  padding: 3px 1px 0 2px;
}

.laser-left .toggle {
  gap: 5px;
  height: 20px;
}

.laser-left .toggle.cut {
  margin-top: 18px;
}

.laser-left .toggle:last-child {
  margin-top: 3px;
}

.two {
  grid-template-columns: 1fr 1fr;
  gap: 8px;
  padding: 0;
  margin-right: 2px;
}

.two .btn {
  height: 22px;
}

.laser-right {
  display: flex;
  flex-direction: column;
  gap: 2px;
  padding: 1px 0 0 6px;
}

.start-row {
  display: flex;
  align-items: center;
  justify-content: flex-end;
  gap: 7px;
}

.dropdown {
  position: relative;
  width: 100px;
}

.combo.open {
  height: 20px;
  border-color: #0a5aa0;
  background-color: #cce4f7;
  color: #0a3c0a;
}

.dropdown ul {
  position: absolute;
  top: 20px;
  left: 0;
  right: 0;
  padding: 0 1px;
  border: 1px solid #555;
  list-style: none;
  background-color: #fff;
  z-index: 1;
  white-space: nowrap;
}

.dropdown li {
  padding-left: 1px;
}

.dropdown .picked {
  color: #fff;
  background-color: #0078d7;
  outline: 1px dotted #f08a24;
}

.job-row {
  display: flex;
  align-items: center;
  justify-content: flex-end;
  gap: 8px;
  height: 53px;
  margin-right: 1px;
}

.job-radios {
  display: flex;
  align-items: flex-end;
  justify-content: space-between;
  width: 97px;
  height: 53px;
  padding: 0 20px 3px 1px;
  border: 1px solid #dcdcdc;
}

.job-radios input[type="radio"] {
  border-color: #bbb;
  background-color: #f4f4f4;
}

.laser-right .btn {
  height: 22px;
  margin-right: 1px;
}

.device-row {
  display: grid;
  grid-template-columns: 73px 1fr;
  gap: 7px;
  padding: 2px 1px 0 2px;
}

.tabs.bottom {
  margin-top: auto;
}

.callout {
  position: absolute;
  top: 580px;
  right: 0;
  width: 301px;
  height: 244px;
  z-index: 2;
  pointer-events: none;
}

/* palette and status bar */
.palette {
  display: flex;
  height: 33px;
  padding-top: 2px;
  border-top: 1px solid #fff;
}

.palette button {
  width: 31px;
  padding: 3px;
}

.palette button.active {
  border: 1px solid #90c8f6;
  background-color: #c0dcf3;
  padding: 2px;
}

.palette button span {
  display: block;
  width: 24px;
  height: 24px;
  margin: auto;
  font-family: "Liberation Sans", sans-serif;
  font-size: 12px;
  line-height: 24px;
}

.palette .light {
  color: #fff;
}

.statusbar {
  display: flex;
  align-items: center;
  height: 24px;
  padding-top: 3px;
}

.statusbar .toggle {
  gap: 5px;
  width: 64px;
  padding-left: 4px;
  border-right: 1px solid #d4d4d4;
}

.statusbar .toggle:first-child {
  width: 62px;
  padding-left: 2px;
}

.statusbar .wide {
  width: 76px;
}

.statusbar .wider {
  width: 88px;
}

.coords {
  flex: 374;
  padding-left: 4px;
}

.cell {
  flex: 448;
  height: 18px;
  border: solid #d4d4d4;
  border-width: 0 1px;
}

.cell.small {
  flex: 153;
  border-left: 0;
}

.size-grip {
  width: 9px;
  height: 9px;
  margin: 9px 3px 0 7px;
}
```

FILE: script.js
```js
const colors = [
  ['00', '#000000', 1], ['01', '#0000ff', 1], ['02', '#ff0000', 1], ['03', '#00e000', 0],
  ['04', '#d0d000', 0], ['05', '#ff8000', 0], ['06', '#00e0e0', 0], ['07', '#ff00ff', 1],
  ['08', '#b4b4b4', 0], ['09', '#0000a0', 1], ['10', '#a00000', 1], ['11', '#00a000', 1],
  ['12', '#a0a000', 0], ['13', '#c08000', 0], ['14', '#00a0ff', 1], ['15', '#a000a0', 1],
  ['16', '#808080', 1], ['17', '#7d87b9', 1], ['18', '#bb7784', 0], ['19', '#4a6fe3', 1],
  ['20', '#d33f6a', 1], ['21', '#8cd78c', 0], ['22', '#f0b98d', 0], ['23', '#f6c4e1', 0],
  ['24', '#fa9ed4', 0], ['25', '#500a78', 1], ['26', '#b45a00', 1], ['27', '#004754', 1],
  ['28', '#86fa88', 0], ['29', '#ffdb66', 0], ['T1', '#f36926', 0], ['T2', '#0c96d9', 1]
];

const palette = document.getElementById('palette');
colors.forEach(([name, color, light], i) => {
  if (name === 'T1') {
    palette.insertAdjacentHTML('beforeend', '<span class="sep"></span>');
  }
  palette.insertAdjacentHTML('beforeend',
    `<button class="${i === 0 ? 'active' : ''}"><span class="${light ? 'light' : ''}" style="background-color: ${color}">${name}</span></button>`);
});

// grid lines and ruler numbers, one every 10 mm
const step = 65.55;
let lines = '';
let labels = '';
for (let i = 0; i <= 11; i++) {
  const x = Math.round(87 + i * step) + 0.5;
  const y = Math.round(167 + i * step) + 0.5;
  if (i > 0) {
    lines += `<path d="M${x} 168v753M88 ${y}h753"/>`;
  }
  labels += `<text x="${x}" y="165" text-anchor="middle">${i * 10}</text>`;
  labels += `<text x="${x}" y="931" text-anchor="middle">${i * 10}</text>`;
  labels += `<text x="76" y="${y + 4}">${i * 10}</text>`;
  labels += `<text x="853" y="${y + 4}" text-anchor="end">${i * 10}</text>`;
}
document.getElementById('grid').innerHTML = lines;
document.getElementById('rulers').innerHTML = labels;
```
